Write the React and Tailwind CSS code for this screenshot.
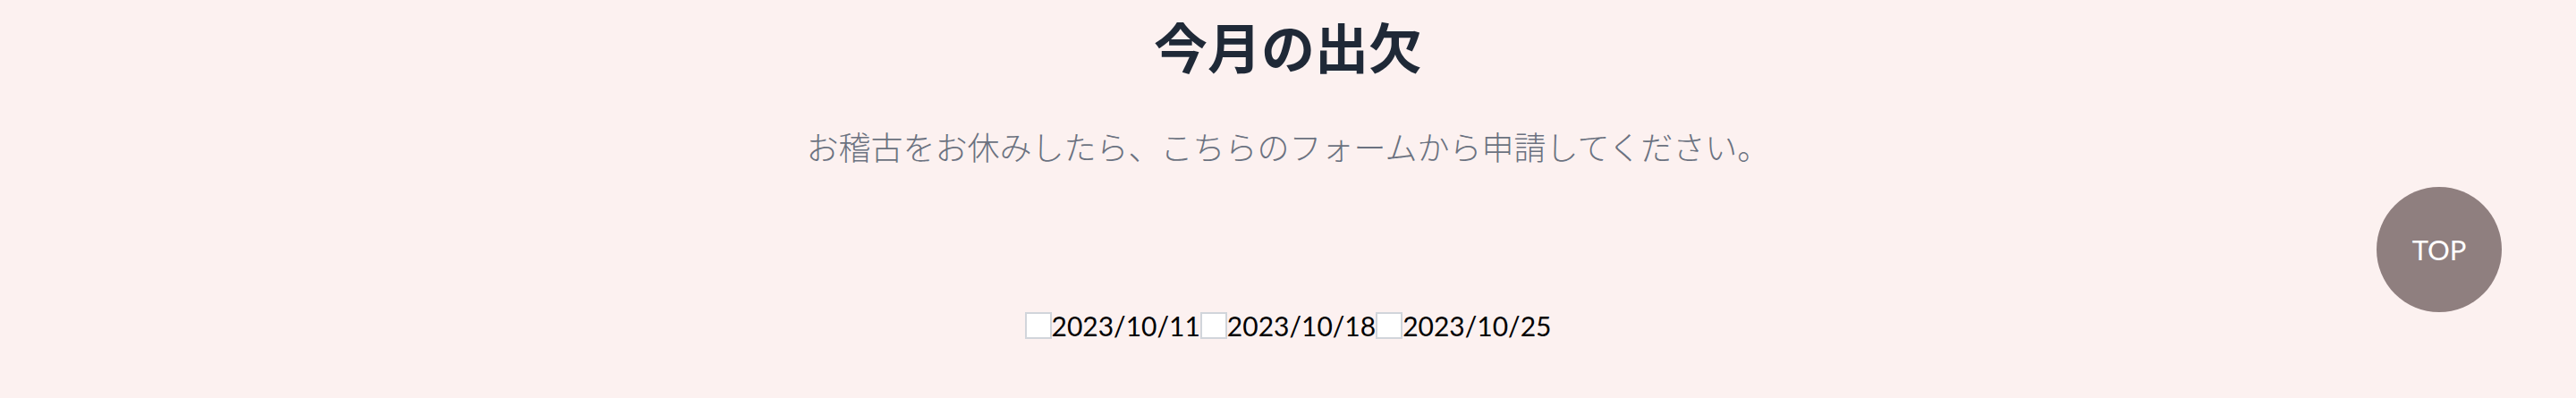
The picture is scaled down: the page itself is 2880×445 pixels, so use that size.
import React from 'react';

const dates = ['2023/10/11', '2023/10/18', '2023/10/25'];

const App = () => {
  return (
    <div className="relative min-h-[445px] bg-[#fcf1f0] font-['Lato','Noto_Sans_CJK_JP',sans-serif]">
      <main className="flex flex-col items-center pt-[21px]">
        {/* Heading */}
        <h1 className="text-[60px] leading-none font-bold text-[#1f2937] font-['Noto_Sans_CJK_JP',sans-serif]">
          今月の出欠
        </h1>
        <p className="mt-[64px] text-[36px] leading-none font-light text-[#6b7280] font-['Noto_Sans_CJK_JP',sans-serif]">
          お稽古をお休みしたら、こちらのフォームから申請してください。
        </p>

        {/* Dates */}
        <div className="mt-[168px] flex items-center h-[30px]">
          {dates.map((d) => (
            <label key={d} className="flex items-center text-[30px] leading-none text-black">
              <input
                type="checkbox"
                className="appearance-none w-[30px] h-[30px] bg-white border-2 border-[#d1d5db] m-0"
              />
              <span>{d}</span>
            </label>
          ))}
        </div>
      </main>

      {/* Back to top */}
      <button className="absolute top-[209px] right-[83px] w-[140px] h-[140px] rounded-full bg-[#8f7f7f] text-white text-[31px] leading-none flex items-center justify-center">
        TOP
      </button>
    </div>
  );
};

export default App;
